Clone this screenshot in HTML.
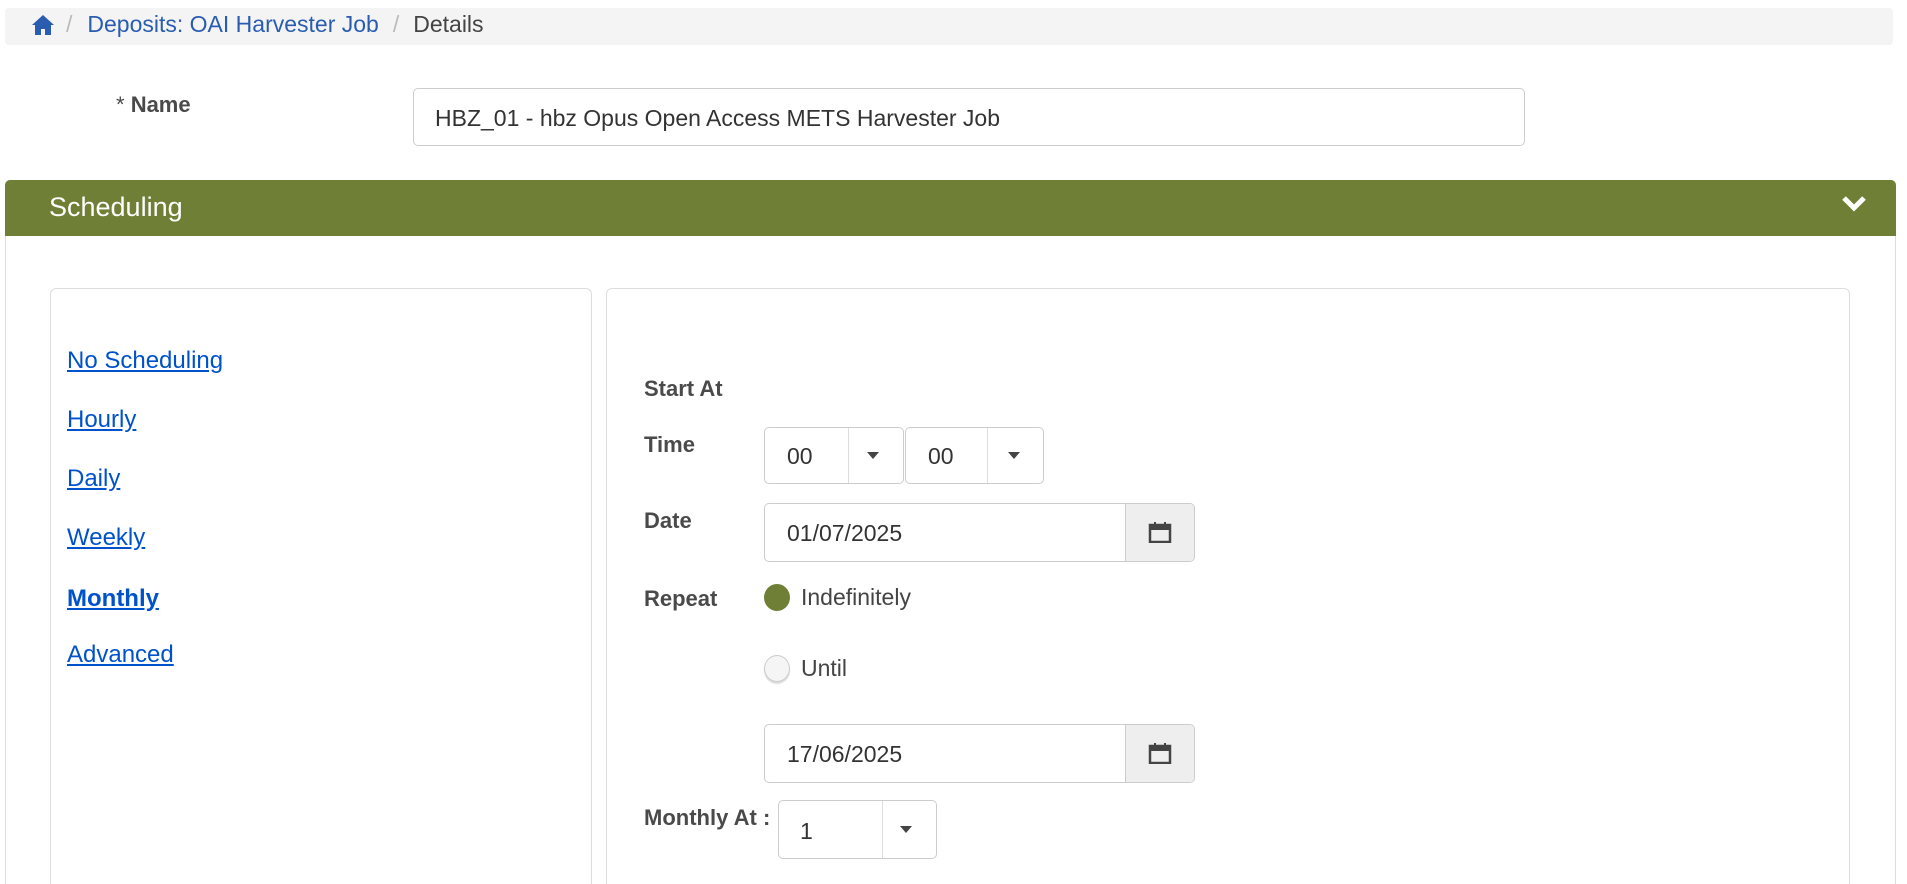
<!DOCTYPE html>
<html><head><meta charset="utf-8"><style>
*{box-sizing:border-box;margin:0;padding:0}
html,body{width:1907px;height:884px;overflow:hidden}
body{background:#fff;font-family:"Liberation Sans",Arial,sans-serif;color:#444;position:relative}
.a{position:absolute}
.bc{left:5px;top:8px;width:1888px;height:37px;background:#f4f4f4;border-radius:4px}
.bcrow{left:31px;top:11px;font-size:23px;white-space:nowrap;display:flex;align-items:center}
.lab{font-weight:bold;font-size:22px;color:#4a4a4a;white-space:nowrap;line-height:24px}
.inp{border:1px solid #ccc;border-radius:5px;background:#fff;font-size:23px;color:#333;white-space:nowrap}
.lnk{left:67px;font-size:24px;color:#0052cc;text-decoration:underline;line-height:26px}
.caret{width:0;height:0;border-left:6px solid transparent;border-right:6px solid transparent;border-top:7px solid #444}
</style></head><body>
<div class="a bc"></div>
<div class="a bcrow">
<svg width="24" height="22" viewBox="0 0 24 22"><path d="M12 1 L1 11 H4 V21 H10 V15 H14 V21 H20 V11 H23 Z" fill="#2a5db0"/></svg>
<span style="color:#bbb;margin:0 15px 0 11px">/</span>
<span style="color:#2a5db0">Deposits: OAI Harvester Job</span>
<span style="color:#bbb;margin:0 14px">/</span>
<span style="color:#444">Details</span>
</div>

<div class="a lab" style="left:116px;top:93px"><span style="font-weight:normal">* </span>Name</div>
<div class="a inp" style="left:413px;top:88px;width:1112px;height:58px;padding:16px 21px">HBZ_01 - hbz Opus Open Access METS Harvester Job</div>

<div class="a" style="left:5px;top:180px;width:1891px;height:704px;border:1px solid #ddd;border-bottom:none;border-radius:5px 5px 0 0"></div>
<div class="a" style="left:5px;top:180px;width:1891px;height:56px;background:#6f7f35;border-radius:5px 5px 0 0"></div>
<div class="a" style="left:49px;top:192px;font-size:27px;color:#fff">Scheduling</div>
<svg class="a" style="left:1841px;top:195px" width="26" height="18" viewBox="0 0 26 18"><path d="M3 3 L13 13 L23 3" stroke="#fff" stroke-width="5" fill="none"/></svg>

<div class="a" style="left:50px;top:288px;width:542px;height:596px;border:1px solid #ddd;border-bottom:none;border-radius:6px 6px 0 0"></div>
<div class="a" style="left:606px;top:288px;width:1244px;height:596px;border:1px solid #ddd;border-bottom:none;border-radius:6px 6px 0 0"></div>

<div class="a lnk" style="top:348px">No Scheduling</div>
<div class="a lnk" style="top:407px">Hourly</div>
<div class="a lnk" style="top:466px">Daily</div>
<div class="a lnk" style="top:525px">Weekly</div>
<div class="a lnk" style="top:586px;font-weight:bold">Monthly</div>
<div class="a lnk" style="top:642px">Advanced</div>

<div class="a lab" style="left:644px;top:377px">Start At</div>
<div class="a lab" style="left:644px;top:433px">Time</div>
<div class="a lab" style="left:644px;top:509px">Date</div>
<div class="a lab" style="left:644px;top:587px">Repeat</div>
<div class="a lab" style="left:644px;top:806px">Monthly At :</div>

<div class="a inp" style="left:764px;top:427px;width:140px;height:57px;padding:15px 22px">00</div>
<div class="a" style="left:848px;top:428px;width:1px;height:55px;background:#ddd"></div>
<div class="a caret" style="left:867px;top:452px"></div>
<div class="a inp" style="left:905px;top:427px;width:139px;height:57px;padding:15px 22px">00</div>
<div class="a" style="left:987px;top:428px;width:1px;height:55px;background:#ddd"></div>
<div class="a caret" style="left:1008px;top:452px"></div>

<div class="a inp" style="left:764px;top:503px;width:431px;height:59px;padding:16px 22px;overflow:hidden">01/07/2025<div class="a" style="left:360px;top:0;width:71px;height:59px;background:#eee;border-left:1px solid #ccc"></div></div>
<svg class="a" style="left:1148px;top:521px" width="24" height="22" viewBox="0 0 24 22"><rect x="2" y="4" width="20" height="17" fill="none" stroke="#444" stroke-width="2.5"/><rect x="2" y="4" width="20" height="5" fill="#444"/><rect x="6" y="1" width="2" height="5" fill="#444"/><rect x="16" y="1" width="2" height="5" fill="#444"/></svg>

<div class="a" style="left:764px;top:584px;width:26px;height:27px;border-radius:50%;background:#6f7f35"></div>
<div class="a" style="left:801px;top:584px;font-size:23px;color:#444">Indefinitely</div>
<div class="a" style="left:764px;top:655px;width:26px;height:27px;border-radius:50%;background:#f5f5f5;border:1px solid #ccc;box-shadow:0 2px 1px #ddd"></div>
<div class="a" style="left:801px;top:655px;font-size:23px;color:#444">Until</div>

<div class="a inp" style="left:764px;top:724px;width:431px;height:59px;padding:16px 22px;overflow:hidden">17/06/2025<div class="a" style="left:360px;top:0;width:71px;height:59px;background:#eee;border-left:1px solid #ccc"></div></div>
<svg class="a" style="left:1148px;top:742px" width="24" height="22" viewBox="0 0 24 22"><rect x="2" y="4" width="20" height="17" fill="none" stroke="#444" stroke-width="2.5"/><rect x="2" y="4" width="20" height="5" fill="#444"/><rect x="6" y="1" width="2" height="5" fill="#444"/><rect x="16" y="1" width="2" height="5" fill="#444"/></svg>

<div class="a inp" style="left:778px;top:800px;width:159px;height:59px;padding:17px 21px">1</div>
<div class="a" style="left:882px;top:801px;width:1px;height:57px;background:#ddd"></div>
<div class="a caret" style="left:900px;top:826px"></div>
</body></html>
